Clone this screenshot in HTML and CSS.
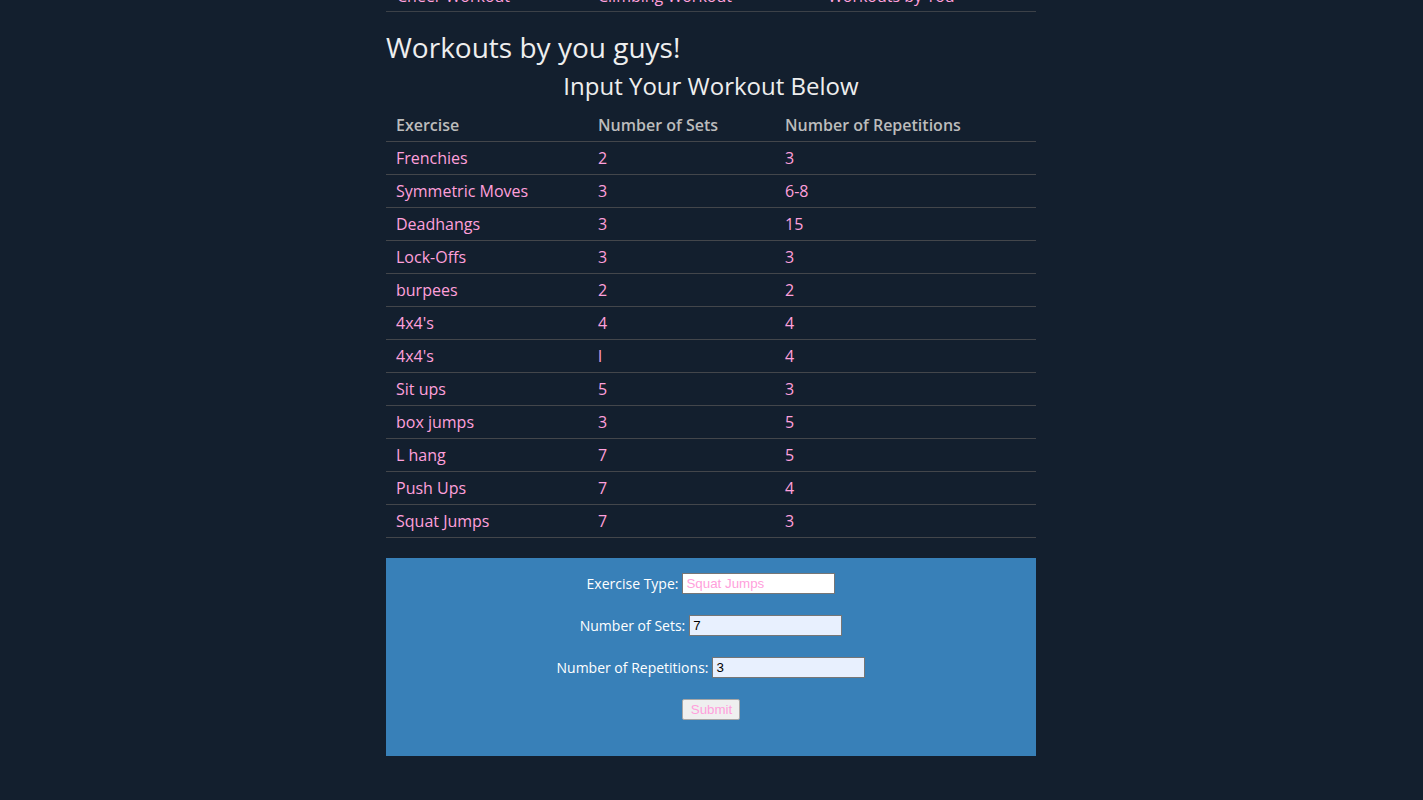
FILE: index.html
```html
<!DOCTYPE html>
<html lang="en">
<head>
<meta charset="utf-8">
<title>Workouts by you guys!</title>
<link rel="stylesheet" href="styles.css">
</head>
<body>
<div class="page">
  <nav class="nav">
    <a class="nav-link" href="#">Cheer Workout</a>
    <a class="nav-link" href="#">Climbing Workout</a>
    <a class="nav-link" href="#">Workouts by You</a>
  </nav>
  <h1 class="title">Workouts by you guys!</h1>
  <h2 class="subtitle">Input Your Workout Below</h2>
  <table class="workouts">
    <thead>
      <tr><th class="c1">Exercise</th><th class="c2">Number of Sets</th><th>Number of Repetitions</th></tr>
    </thead>
    <tbody>
      <tr><td>Frenchies</td><td>2</td><td>3</td></tr>
      <tr><td>Symmetric Moves</td><td>3</td><td>6-8</td></tr>
      <tr><td>Deadhangs</td><td>3</td><td>15</td></tr>
      <tr><td>Lock-Offs</td><td>3</td><td>3</td></tr>
      <tr><td>burpees</td><td>2</td><td>2</td></tr>
      <tr><td>4x4's</td><td>4</td><td>4</td></tr>
      <tr><td>4x4's</td><td>l</td><td>4</td></tr>
      <tr><td>Sit ups</td><td>5</td><td>3</td></tr>
      <tr><td>box jumps</td><td>3</td><td>5</td></tr>
      <tr><td>L hang</td><td>7</td><td>5</td></tr>
      <tr><td>Push Ups</td><td>7</td><td>4</td></tr>
      <tr><td>Squat Jumps</td><td>7</td><td>3</td></tr>
    </tbody>
  </table>
  <form class="entry">
    <div class="field"><label class="label" for="ex">Exercise Type:</label><input class="inp" id="ex" type="text" value="Squat Jumps"></div>
    <div class="field"><label class="label" for="sets">Number of Sets:</label><input class="inp auto" id="sets" type="text" value="7"></div>
    <div class="field"><label class="label" for="reps">Number of Repetitions:</label><input class="inp auto" id="reps" type="text" value="3"></div>
    <div class="field"><button class="submit" type="button">Submit</button></div>
  </form>
</div>
</body>
</html>
```

FILE: styles.css
```css
html, body {
  margin: 0;
  padding: 0;
  background: #131f2e;
  font-family: "Open Sans", "Liberation Sans", sans-serif;
  overflow: hidden;
}

.page {
  width: 650px;
  margin-left: calc(50% - 325.5px);
}

.nav {
  display: grid;
  grid-template-columns: 201px 230px 1fr;
  margin-top: -29px;
  height: 41px;
  padding: 14px 0 0 11px;
  box-sizing: border-box;
  border-bottom: 1px solid #3c4148;
}

.nav-link {
  color: #ffa0dc;
  text-decoration: none;
  font-size: 16px;
  line-height: 22px;
}

.title {
  margin: 18px 0 0;
  font-size: 28px;
  line-height: 34px;
  font-weight: 400;
  color: #eeeeee;
}

.subtitle {
  margin: 7px 0 0;
  font-size: 24px;
  line-height: 29px;
  font-weight: 400;
  color: #eeeeee;
  text-align: center;
}

.workouts {
  margin-top: 9px;
  width: 100%;
  border-collapse: collapse;
  font-size: 16px;
  line-height: 22px;
}

.workouts th,
.workouts td {
  padding: 5px 10px;
  text-align: left;
  border-bottom: 1px solid #43464b;
}

.workouts th {
  color: #bcbcbc;
  font-weight: 600;
}

.workouts td {
  color: #ffa0dc;
}

.workouts .c1 { width: 182px; }
.workouts .c2 { width: 167px; }

.entry {
  margin-top: 20px;
  background: #3880b8;
  padding: 15px 0 36px;
  display: flex;
  flex-direction: column;
  align-items: center;
  gap: 21px;
}

.field {
  display: flex;
  align-items: center;
  height: 21px;
}

.label {
  color: #ffffff;
  font-size: 14px;
  margin-right: 4px;
}

.inp {
  width: 153px;
  height: 21px;
  box-sizing: border-box;
  border: 1px solid #767676;
  padding: 1px 3px;
  font-family: "Liberation Sans", Arial, sans-serif;
  font-size: 13.33px;
  background: #ffffff;
  color: #ffa0dc;
}

.inp.auto {
  background: #e8f0fe;
  color: #000000;
}

.submit {
  height: 21px;
  box-sizing: border-box;
  padding: 1px 7px 1px 8px;
  font-family: "Liberation Sans", Arial, sans-serif;
  font-size: 13.33px;
  color: #ffa0dc;
  background: #efefef;
  border: 1px solid #a6a6a6;
  border-radius: 2px;
}
```
